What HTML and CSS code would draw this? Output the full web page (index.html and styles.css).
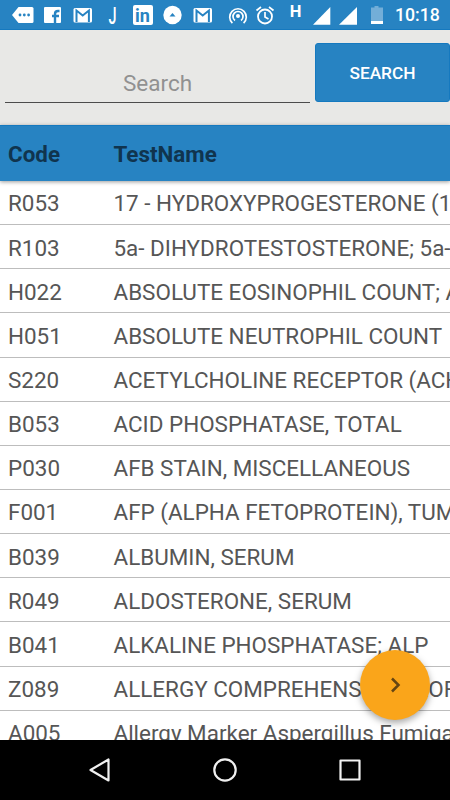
FILE: index.html
```html
<!DOCTYPE html>
<html lang="en">
<head>
    <meta charset="UTF-8">
    <meta name="viewport" content="width=device-width, initial-scale=1.0">
    <title>Test List</title>
    <link rel="stylesheet" href="styles.css">
</head>
<body>
    <div class="status-bar">
        <div class="notifications">
            <svg viewBox="0 0 22 20"><path fill="#fff" d="M6.500 2H20q1.500 0 1.500 1.500v13q0 1.500-1.500 1.500H6.500L0 10z"/><g fill="#2783c2"><circle cx="8" cy="10" r="1.400"/><circle cx="12.300" cy="10" r="1.400"/><circle cx="16.600" cy="10" r="1.400"/></g></svg>
            <svg viewBox="0 0 22 20"><rect x="2" y="2" width="17" height="16" rx="1" fill="#fff"/><path d="M13 18v-9q0-3 3-3h1.500M10 11h7" fill="none" stroke="#2783c2" stroke-width="2.400"/></svg>
            <svg viewBox="0 0 22 20"><rect x="1.500" y="3" width="18.500" height="14.500" rx="1.500" fill="#fff"/><path d="M4.500 17V5.500l6.200 5 6.200-5V17" fill="none" stroke="#2783c2" stroke-width="2"/></svg>
            <svg viewBox="0 0 22 20"><text transform="translate(6.500 18.500) scale(.6 1)" font-size="24" font-weight="500" fill="#fff">J</text></svg>
            <svg viewBox="0 0 22 20"><rect x="1" y="0" width="20" height="20" rx="2" fill="#fff"/><text x="3" y="16.500" font-size="18" font-weight="700" fill="#2783c2">in</text></svg>
            <svg viewBox="0 0 22 20"><circle cx="10.500" cy="10" r="9.200" fill="#fff"/><path d="M7.500 11.500 10.500 8l3 3.500z" fill="#2783c2"/></svg>
            <svg viewBox="0 0 22 20"><rect x="1.500" y="3" width="18.500" height="14.500" rx="1.500" fill="#fff"/><path d="M4.500 17V5.500l6.200 5 6.200-5V17" fill="none" stroke="#2783c2" stroke-width="2"/></svg>
        </div>
        <div class="system-icons">
            <svg viewBox="0 0 28 20"><circle cx="14" cy="11" r="2" fill="#fff"/><path d="M8.400 18.200a8.300 8.300 0 1 1 11.200 0M11 15.500a5 5 0 1 1 6 0" fill="none" stroke="#fff" stroke-width="1.700"/></svg>
            <svg viewBox="0 0 28 20"><circle cx="13" cy="11.500" r="7" fill="none" stroke="#fff" stroke-width="1.800"/><path d="M13 7v5l3.500 2M4.500 5.500 9 2M21.500 5.500 17 2" fill="none" stroke="#fff" stroke-width="1.700"/></svg>
            <svg viewBox="0 0 28 20"><text x="9.800" y="12" font-size="16.500" font-weight="700" fill="#fff">H</text></svg>
            <svg viewBox="0 0 28 20"><path d="M5 19.700 22.300 2v17.700z" fill="#fff"/></svg>
            <svg viewBox="0 0 28 20"><path d="M3 19.700 21 2v17.700z" fill="#fff"/></svg>
            <svg viewBox="0 0 28 20"><path d="M7 2.500h3.500V1h4v1.500H19V16H7z" fill="#73aed8"/><path d="M7 16h12v3H7z" fill="#fff"/></svg>
        </div>
        <span class="clock">10:18</span>
    </div>

    <div class="search-area">
        <input type="text" class="search-input" placeholder="Search">
        <button class="search-btn">SEARCH</button>
    </div>

    <div class="table-header">
        <span class="code">Code</span>
        <span class="name">TestName</span>
    </div>

    <div class="test-list">
        <div class="row"><span class="code">R053</span><span class="name">17 - HYDROXYPROGESTERONE (17 OHP)</span></div>
        <div class="row"><span class="code">R103</span><span class="name">5a- DIHYDROTESTOSTERONE; 5a-DHT</span></div>
        <div class="row"><span class="code">H022</span><span class="name">ABSOLUTE EOSINOPHIL COUNT; AEC</span></div>
        <div class="row"><span class="code">H051</span><span class="name">ABSOLUTE NEUTROPHIL COUNT</span></div>
        <div class="row"><span class="code">S220</span><span class="name">ACETYLCHOLINE RECEPTOR (ACHR)</span></div>
        <div class="row"><span class="code">B053</span><span class="name">ACID PHOSPHATASE, TOTAL</span></div>
        <div class="row"><span class="code">P030</span><span class="name">AFB STAIN, MISCELLANEOUS</span></div>
        <div class="row"><span class="code">F001</span><span class="name">AFP (ALPHA FETOPROTEIN), TUMOR</span></div>
        <div class="row"><span class="code">B039</span><span class="name">ALBUMIN, SERUM</span></div>
        <div class="row"><span class="code">R049</span><span class="name">ALDOSTERONE, SERUM</span></div>
        <div class="row"><span class="code">B041</span><span class="name">ALKALINE PHOSPHATASE; ALP</span></div>
        <div class="row"><span class="code">Z089</span><span class="name">ALLERGY COMPREHENSIVE PROFILE</span></div>
        <div class="row"><span class="code">A005</span><span class="name">Allergy Marker Aspergillus Fumigatus</span></div>
    </div>

    <button class="next-btn" aria-label="Next">
        <svg viewBox="0 0 70 70"><path d="m32 28.500 6.500 6.500-6.500 6.500" fill="none" stroke="#654512" stroke-width="2.500"/></svg>
    </button>

    <div class="nav-bar">
        <svg viewBox="0 0 26 26"><path d="M21.500 2.500v21L3.500 13z"/></svg>
        <svg viewBox="0 0 26 26"><circle cx="13" cy="13" r="10.700"/></svg>
        <svg viewBox="0 0 26 26"><rect x="3.500" y="3.500" width="19" height="19"/></svg>
    </div>
</body>
</html>
```
FILE: styles.css
```css
:root {
    --primary-color: #2783c2;
    --accent-color: #faa51a;
    --text-color: #565656;
}

* {
    margin: 0;
    padding: 0;
    box-sizing: border-box;
}

body {
    font-family: Roboto, sans-serif;
    background: #fff;
    height: 100vh;
    display: flex;
    flex-direction: column;
    overflow: hidden;
}

.status-bar {
    height: 30px;
    flex-shrink: 0;
    display: flex;
    align-items: center;
    padding-left: 12px;
    background: var(--primary-color);
    border-bottom: 1px solid #1579bf;
}

.status-bar svg {
    display: block;
    height: 20px;
    overflow: visible;
}

.notifications {
    display: flex;
    gap: 8px;
}

.notifications svg {
    width: 22px;
}

.system-icons {
    display: flex;
    margin-left: 10px;
}

.system-icons svg {
    width: 28px;
}

.clock {
    margin-left: 3px;
    color: #fff;
    font-size: 17.7px;
    font-weight: 500;
    line-height: 30px;
    padding-top: 1px;
}

.search-area {
    height: 95px;
    flex-shrink: 0;
    display: flex;
    align-items: flex-start;
    gap: 5px;
    padding: 13px 0 0 5px;
    background: #e8e8e6;
}

.search-input {
    flex: 1;
    min-width: 0;
    height: 60px;
    padding-top: 20px;
    border: none;
    border-bottom: 1px solid #4c4c4c;
    background: transparent;
    font-family: inherit;
    font-size: 22.5px;
    text-align: center;
    outline: none;
}

.search-input::placeholder {
    color: #919191;
}

.search-btn {
    width: 135px;
    height: 59px;
    border: 1px solid #1579bf;
    border-radius: 3px;
    background: var(--primary-color);
    color: #fff;
    font-family: inherit;
    font-size: 17.3px;
    font-weight: 500;
}

.table-header {
    position: relative;
    height: 56px;
    flex-shrink: 0;
    display: flex;
    align-items: center;
    padding-left: 8px;
    background: var(--primary-color);
    border-top: 1px solid #1579bf;
    box-shadow: 0 1px 4px rgba(0, 0, 0, 0.4);
    color: #10344e;
    font-size: 22.4px;
    font-weight: 700;
}

.code {
    width: 105.5px;
    flex-shrink: 0;
}

.name {
    white-space: nowrap;
}

.test-list {
    flex: 1;
    min-height: 0;
    overflow: hidden;
}

.row {
    height: 44.15px;
    display: flex;
    align-items: center;
    padding: 1.7px 0 0 8px;
    border-bottom: 1px solid #bdbdbd;
    color: var(--text-color);
    font-size: 22.45px;
}

.next-btn {
    position: absolute;
    right: 20px;
    bottom: 80px;
    width: 70px;
    height: 70px;
    border: none;
    border-radius: 50%;
    background: var(--accent-color);
    box-shadow: 0 3px 7px rgba(0, 0, 0, 0.35);
}

.next-btn svg {
    display: block;
}

.nav-bar {
    height: 60px;
    flex-shrink: 0;
    display: flex;
    align-items: center;
    justify-content: center;
    gap: 99px;
    background: #000;
}

.nav-bar svg {
    width: 26px;
    fill: none;
    stroke: #f0f0f0;
    stroke-width: 2.2;
    stroke-linejoin: round;
}
```
